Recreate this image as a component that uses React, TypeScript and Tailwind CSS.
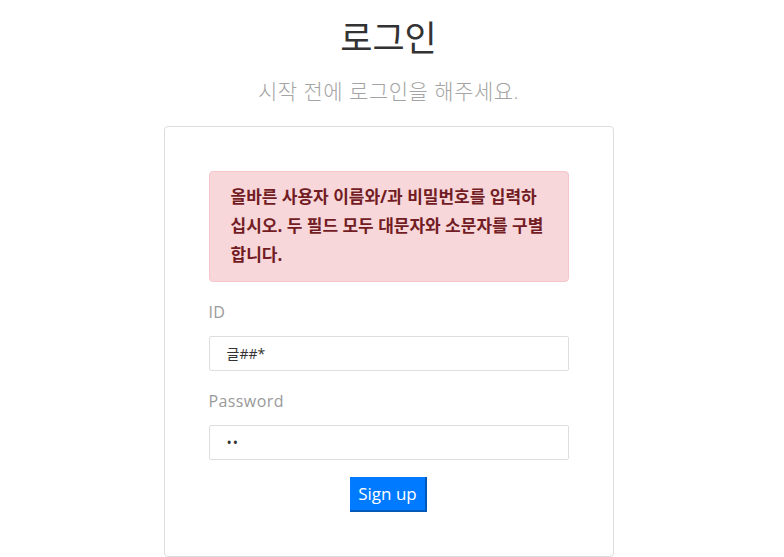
import React from 'react';

const font = { fontFamily: '"Open Sans", "Noto Sans CJK KR", sans-serif' };

const App: React.FC = () => {
  return (
    <div className="min-h-screen bg-white" style={font}>
      <div className="w-[777px] flex flex-col items-center">
        {/* Heading */}
        <h1 className="mt-[14px] text-[35px] leading-[48px] text-[#333] font-normal">로그인</h1>
        <p className="mt-[15px] text-[21px] leading-[28px] tracking-[0.5px] text-[#a4a4a4] font-light">시작 전에 로그인을 해주세요.</p>

        {/* Card */}
        <div className="mt-[21px] w-[450px] border border-[#dddddd] rounded-[4px] p-[44px] flex flex-col">
          <div className="bg-[#f8d7da] border border-[#f5c6cb] rounded-[4px] text-[#721c24] font-bold text-[17px] leading-[29px] pl-[21px] pr-[22px] pt-[10px] pb-[12px]">
            올바른 사용자 이름와/과 비밀번호를 입력하십시오. 두 필드 모두 대문자와 소문자를 구별합니다.
          </div>

          <label className="mt-[18px] text-[16px] leading-[24px] tracking-[0.4px] text-[#9a9a9a]">ID</label>
          <div className="mt-[12px] h-[35px] border border-[#dedede] rounded-[2px] flex items-center pl-[17px] text-[14px] text-[#333]">
            글##*
          </div>

          <label className="mt-[18px] text-[16px] leading-[24px] tracking-[0.4px] text-[#9a9a9a]">Password</label>
          <div className="mt-[12px] h-[35px] border border-[#dedede] rounded-[2px] flex items-center pl-[17px] text-[14px] text-[#333] tracking-[1px]">
            ••
          </div>

          <div className="mt-[17px] flex justify-center">
            <button className="h-[35px] px-[8px] bg-[#007bff] text-white text-[17px] border-r-2 border-b-2 border-[#0058b8]">
              Sign up
            </button>
          </div>
        </div>
      </div>
    </div>
  );
};

export default App;
